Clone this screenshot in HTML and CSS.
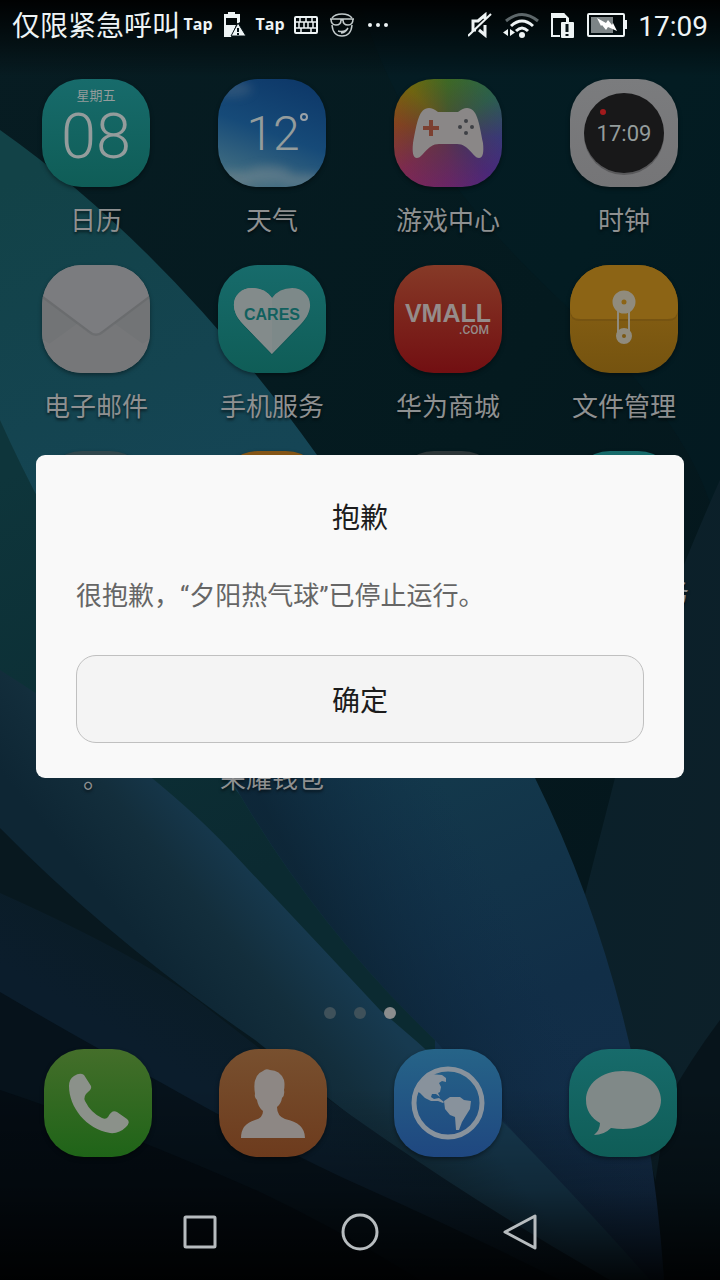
FILE: index.html
```
<!DOCTYPE html>
<html lang="zh-CN">
<head>
    <meta charset="UTF-8">
    <meta name="viewport" content="width=device-width, initial-scale=1.0">
    <title>抱歉</title>
    <link rel="stylesheet" href="styles.css">
</head>
<body>
    <div class="phone">
        <!-- 壁纸 -->
        <svg class="wallpaper" viewBox="0 0 720 1280" preserveAspectRatio="none" aria-hidden="true">
            <defs>
                <linearGradient id="base" x1="0" y1="0" x2="1" y2="1">
                    <stop offset="0" stop-color="#071c22"/>
                    <stop offset="0.5" stop-color="#041a1f"/>
                    <stop offset="1" stop-color="#05141b"/>
                </linearGradient>
                <linearGradient id="petal" gradientUnits="userSpaceOnUse" x1="80" y1="150" x2="560" y2="1250">
                    <stop offset="0" stop-color="#124247"/>
                    <stop offset="0.3" stop-color="#154555"/>
                    <stop offset="0.6" stop-color="#13384b"/>
                    <stop offset="0.8" stop-color="#112e47"/>
                    <stop offset="1" stop-color="#142d4a"/>
                </linearGradient>
                <linearGradient id="petalShade" gradientUnits="userSpaceOnUse" x1="330" y1="930" x2="480" y2="850">
                    <stop offset="0" stop-color="#0c2233" stop-opacity="0.8"/>
                    <stop offset="1" stop-color="#0f2b48" stop-opacity="0"/>
                </linearGradient>
                <linearGradient id="green" gradientUnits="userSpaceOnUse" x1="0" y1="480" x2="200" y2="900">
                    <stop offset="0" stop-color="#0e353b"/>
                    <stop offset="1" stop-color="#0b2a31"/>
                </linearGradient>
                <linearGradient id="band" gradientUnits="userSpaceOnUse" x1="130" y1="930" x2="240" y2="840">
                    <stop offset="0" stop-color="#0e2634"/>
                    <stop offset="0.5" stop-color="#132e3c"/>
                    <stop offset="1" stop-color="#173a50"/>
                </linearGradient>
                <linearGradient id="low" gradientUnits="userSpaceOnUse" x1="60" y1="1000" x2="120" y2="900">
                    <stop offset="0" stop-color="#0b1d2c"/>
                    <stop offset="1" stop-color="#0a1c25"/>
                </linearGradient>
                <linearGradient id="side" x1="0" y1="0" x2="1" y2="1">
                    <stop offset="0" stop-color="#0a202a"/>
                    <stop offset="1" stop-color="#0d2029"/>
                </linearGradient>
                <linearGradient id="fade" x1="0" y1="0" x2="0" y2="1">
                    <stop offset="0" stop-color="#000" stop-opacity="0.95"/>
                    <stop offset="0.06" stop-color="#000" stop-opacity="0"/>
                    <stop offset="0.85" stop-color="#000" stop-opacity="0"/>
                    <stop offset="0.93" stop-color="#000" stop-opacity="0.3"/>
                    <stop offset="1" stop-color="#000" stop-opacity="0.9"/>
                </linearGradient>
            </defs>
            <rect width="720" height="1280" fill="url(#base)"/>
            <path d="M360 0 Q400 150 560 300 T720 560 V0Z" fill="#04202a" opacity="0.3"/>
            <path d="M720 480 Q640 660 615 778 L585 895 L680 1280 H720Z" fill="url(#side)"/>
            <path d="M720 1020 Q690 1060 668 1100 L640 1280 H720Z" fill="#07141b"/>
            <path d="M0 130 Q170 250 317 455 Q450 610 535 778 Q645 1000 664 1280 H0Z" fill="url(#petal)"/>
            <path d="M200 720 L240 795 Q320 930 435 1040 L640 1280 H664 Q645 1000 535 778 L500 720Z" fill="url(#petalShade)"/>
            <path d="M0 420 Q90 620 240 795 Q320 930 435 1040 V1100 H0Z" fill="url(#green)"/>
            <path d="M0 670 Q150 765 230 850 Q310 935 380 1010 Q440 1060 503 1122 Q570 1190 650 1280 H0Z" fill="url(#band)"/>
            <path d="M0 828 Q110 940 255 1040 Q330 1100 560 1280 H0Z" fill="#08181f"/>
            <path d="M0 893 Q150 960 210 1010 Q400 1160 610 1280 H0Z" fill="url(#low)"/>
            <path d="M0 992 Q90 1045 160 1082 Q280 1150 370 1190 Q470 1235 560 1280 H0Z" fill="#06121b"/>
            <path d="M0 1090 Q120 1130 260 1192 Q340 1230 420 1280 H0Z" fill="#040c13"/>
            <rect width="720" height="1280" fill="url(#fade)"/>
        </svg>

        <header class="status-bar">
            <span class="carrier">仅限紧急呼叫</span>
            <div class="notices">
                <span class="tap">Tap</span>
                <span>
                    <svg width="24" height="26" viewBox="0 0 24 26">
                        <path d="M6 0h7v2h5v8l-3 2V6H4v8h9L9 25H2V2h4z" fill="#eef4f5"/>
                        <path d="M4 13h10l-5 12H2z" fill="#eef4f5"/>
                        <path d="M16 11l8 13H9z" fill="#eef4f5" stroke="#061317" stroke-width="1"/>
                        <path d="M16 16v4M16 21v2" stroke="#061317" stroke-width="2"/>
                    </svg>
                </span>
                <span class="tap">Tap</span>
                <span>
                    <svg width="24" height="18" viewBox="0 0 24 18" fill="none" stroke="#eef4f5">
                        <rect x="1" y="1" width="22" height="16" rx="1" stroke-width="2"/>
                        <path d="M1 6h22M1 12h22M6 1v5M12 1v5M18 1v5M5 6v6M10 6v6M14 6v6M19 6v6M7 12v5M17 12v5" stroke-width="1.500"/>
                    </svg>
                </span>
                <span>
                    <svg width="26" height="24" viewBox="0 0 26 24" fill="none" stroke="#c3cbcc" stroke-width="1.500">
                        <path d="M3 5Q6 1 13 1t10 4"/>
                        <path d="M1 6h24M2 6q0 6 5 6t5-5h2q0 5 5 5t5-6"/>
                        <path d="M3 12q1 11 10 11t10-11M9 18q7 2 10-3M12 20q4 0 7-5"/>
                    </svg>
                </span>
                <span>
                    <svg width="20" height="4" viewBox="0 0 20 4" fill="#eef4f5">
                        <circle cx="2" cy="2" r="2"/><circle cx="10" cy="2" r="2"/><circle cx="18" cy="2" r="2"/>
                    </svg>
                </span>
            </div>
            <div class="signals">
                <svg width="24" height="26" viewBox="1 0 24 26" fill="none" stroke="#eef4f5" stroke-width="2">
                    <path d="M18 7V3l-7 6H6v9h3M18 13v10l-6-5" stroke-width="3"/>
                    <path d="M1 24L24 2"/>
                </svg>
                <svg width="38" height="26" viewBox="0 0 38 26" fill="none" stroke-width="3">
                    <path d="M4 9Q20-4 36 9" stroke="#5d676a"/>
                    <path d="M9 14q11-10 22 0M14 19q6-6 12 0" stroke="#eef4f5"/>
                    <circle cx="20" cy="23" r="3" fill="#eef4f5"/>
                    <path d="M6 17v7l-5-3.500zM8 17v7l5-3.500z" fill="#eef4f5"/>
                </svg>
                <svg width="26" height="26" viewBox="0 0 26 26">
                    <path d="M1 1h13l5 5v4h-3V6H3v17h7v2H1z" fill="#eef4f5"/>
                    <path d="M3 1h11l3 5H3z" fill="#eef4f5"/>
                    <rect x="11" y="10" width="13" height="16" rx="1" fill="#eef4f5"/>
                    <path d="M17 12v8M17 22v2" stroke="#061317" stroke-width="3"/>
                </svg>
                <svg width="42" height="26" viewBox="0 0 42 26">
                    <rect x="2" y="2" width="36" height="22" rx="1" fill="none" stroke="#eef4f5" stroke-width="2"/>
                    <rect x="5" y="5" width="22" height="16" fill="#7c8486"/>
                    <path d="M39 8h2v9h-2z" fill="#eef4f5"/>
                    <path d="M11 6l9 5 2-3 4 5 1-2 4 8-9-4-2 3-4-5-1 1z" fill="#fff"/>
                </svg>
                <span class="time">17:09</span>
            </div>
        </header>

        <main class="apps">
            <button class="app" type="button">
                <span class="icon teal">
                    <svg viewBox="0 0 108 108">
                        <text class="weekday" x="54" y="21">星期五</text>
                        <text class="day" x="54" y="79">08</text>
                    </svg>
                </span>
                <span class="label">日历</span>
            </button>
            <button class="app" type="button">
                <span class="icon sky">
                    <svg viewBox="0 0 108 108">
                        <defs>
                            <filter id="soft"><feGaussianBlur stdDeviation="5"/></filter>
                        </defs>
                        <g filter="url(#soft)" fill="#7b8b93" opacity="0.5">
                            <ellipse cx="50" cy="96" rx="24" ry="9"/>
                            <ellipse cx="18" cy="100" rx="22" ry="8"/>
                            <ellipse cx="84" cy="102" rx="24" ry="7"/>
                            <ellipse cx="14" cy="10" rx="20" ry="8" opacity="0.5"/>
                        </g>
                        <text class="degrees" x="55" y="71">12</text>
                        <circle cx="86" cy="38" r="3" fill="none" stroke="#9aa2a8" stroke-width="2"/>
                    </svg>
                </span>
                <span class="label">天气</span>
            </button>
            <button class="app" type="button">
                <span class="icon rainbow">
                    <svg viewBox="0 0 108 108">
                        <path d="M35 29q4 0 9 4h20q5-4 9-4c10 0 12 14 16 35 1 9 0 15-4 15-6 0-10-14-22-14H45C33 65 29 79 23 79c-4 0-5-6-4-15 4-21 6-35 16-35z" fill="#8a8787"/>
                        <path d="M29 49h16M37 41v16" stroke="#7c4031" stroke-width="4"/>
                        <g fill="#3e4045"><circle cx="72" cy="42" r="2"/><circle cx="72" cy="54" r="2"/><circle cx="66" cy="48" r="2"/><circle cx="78" cy="48" r="2"/></g>
                    </svg>
                </span>
                <span class="label">游戏中心</span>
            </button>
            <button class="app" type="button">
                <span class="icon silver">
                    <svg viewBox="0 0 108 108">
                        <circle cx="54" cy="56" r="40" fill="#3c3c3e" opacity="0.5"/>
                        <circle cx="54" cy="54" r="40" fill="#181819"/>
                        <circle cx="33" cy="33" r="3" fill="#a11a1c"/>
                        <text class="clock" x="54" y="62">17:09</text>
                    </svg>
                </span>
                <span class="label">时钟</span>
            </button>

            <button class="app" type="button">
                <span class="icon silver">
                    <svg viewBox="0 0 108 108">
                        <path d="M0 30L54 68 108 30V74L54 108 0 74z" fill="#727476"/>
                        <path d="M0 84L36 58Q54 78 72 58L108 84V108H0z" fill="#767779"/>
                        <path d="M0 31L48 67Q54 72 60 67L108 31" fill="none" stroke="#5f6264" stroke-width="3" opacity="0.4"/>
                        <path d="M0 0H108V30L60 66Q54 71 48 66L0 30z" fill="#7b7c7f"/>
                    </svg>
                </span>
                <span class="label">电子邮件</span>
            </button>
            <button class="app" type="button">
                <span class="icon teal">
                    <svg viewBox="0 0 108 108">
                        <path d="M54 90L25 60C8 43 17 23 34 23q13 0 20 10 7-10 20-10c17 0 26 20 9 37z" fill="#0b4b49" opacity="0.5"/>
                        <path d="M54 89L25 59C8 42 17 23 34 23q13 0 20 10 7-10 20-10c17 0 26 19 9 36z" fill="#7d8989"/>
                        <path d="M54 33v56L25 59C8 42 17 23 34 23q13 0 20 10z" fill="#838b8b"/>
                        <text class="cares" x="54" y="55">CARES</text>
                    </svg>
                </span>
                <span class="label">手机服务</span>
            </button>
            <button class="app" type="button">
                <span class="icon red">
                    <svg viewBox="0 0 108 108">
                        <text class="vmall" x="54" y="57">VMALL</text>
                        <text class="com" x="95" y="69">.COM</text>
                    </svg>
                </span>
                <span class="label">华为商城</span>
            </button>
            <button class="app" type="button">
                <span class="icon yellow">
                    <svg viewBox="0 0 108 108">
                        <path d="M0 0H108V46Q108 56 98 56H10Q0 56 0 46z" fill="#6b4c0f" opacity="0.5"/>
                        <path d="M0 0H108V44Q108 54 98 54H10Q0 54 0 44z" fill="#8c6415"/>
                        <path d="M48 40v30M59 40v30" stroke="#908b7d" stroke-width="2"/>
                        <circle cx="54" cy="37" r="7" fill="#8c6415" stroke="#908b7d" stroke-width="9"/>
                        <circle cx="54" cy="71" r="5" fill="#7b5813" stroke="#908b7d" stroke-width="6"/>
                    </svg>
                </span>
                <span class="label">文件管理</span>
            </button>

            <button class="app" type="button"><span class="icon slate"></span></button>
            <button class="app" type="button"><span class="icon amber"></span></button>
            <button class="app" type="button"><span class="icon graphite"></span></button>
            <button class="app" type="button"><span class="icon teal"></span><span class="label">会员与服务</span></button>

            <button class="app" type="button"><span class="icon slate"></span><span class="label">。</span></button>
            <button class="app" type="button"><span class="icon amber"></span><span class="label">荣耀钱包</span></button>
        </main>

        <div class="pages">
            <span class="dot"></span>
            <span class="dot"></span>
            <span class="dot current"></span>
        </div>

        <div class="dock">
            <button class="app" type="button" aria-label="电话">
                <span class="icon green">
                    <svg viewBox="0 0 108 108">
                        <path d="M30 27q6-4 10-1l7 11q1 3-3 6-5 4-3 9 6 12 17 17 4 2 6-1 4-8 9-5l10 7q4 3-1 8-7 7-16 6C42 80 25 58 25 37q0-7 5-10z" fill="#8b918a"/>
                    </svg>
                </span>
            </button>
            <button class="app" type="button" aria-label="联系人">
                <span class="icon orange">
                    <svg viewBox="0 0 108 108">
                        <path d="M22 89q0-14 14-18 8-2 8-9-5-4-6-11-3-3-2-6-3-19 8-23 3-3 7-1 10 0 14 10 1 5 0 10 1 5-2 8-1 6-5 9 0 9 8 12 20 4 20 19z" fill="#8d8784"/>
                    </svg>
                </span>
            </button>
            <button class="app" type="button" aria-label="浏览器">
                <span class="icon blue">
                    <svg viewBox="0 0 108 108">
                        <circle cx="54" cy="54" r="34" fill="none" stroke="#88929c" stroke-width="5"/>
                        <path d="M22 42L26 33 36 25 48 26 52 29 52 33 48 32 45 34 47 38 46 43 44 44 46 48 42 45 38 45 37 48 40 50 45 49 50 53 49 54 44 52 37 52 31 49 26 44z" fill="#88929c"/>
                        <path d="M50 52L56 48 66 48 70 51 77 52 76 60 71 68 68 73 65 81 62 81 61 68 56 66 51 60z" fill="#88929c"/>
                    </svg>
                </span>
            </button>
            <button class="app" type="button" aria-label="信息">
                <span class="icon teal">
                    <svg viewBox="0 0 108 108">
                        <path d="M54 22c22 0 38 13 38 29S77 80 54 80q-6 0-12-1-7 7-17 7 6-5 6-12Q17 66 17 51c0-16 15-29 37-29z" fill="#808988"/>
                    </svg>
                </span>
            </button>
        </div>

        <nav class="nav-bar">
            <button type="button" aria-label="最近任务">
                <svg width="40" height="40" viewBox="0 0 40 40"><rect x="5" y="5" width="30" height="30" rx="1"/></svg>
            </button>
            <button type="button" aria-label="主页">
                <svg width="40" height="40" viewBox="0 0 40 40"><circle cx="20" cy="20" r="17"/></svg>
            </button>
            <button type="button" aria-label="返回">
                <svg width="40" height="40" viewBox="0 0 40 40"><path d="M5 20L35 4V36z"/></svg>
            </button>
        </nav>

        <!-- 错误提示框 -->
        <div class="overlay">
            <div class="dialog" role="alertdialog" aria-labelledby="dialogTitle" aria-describedby="dialogText">
                <h1 id="dialogTitle">抱歉</h1>
                <p id="dialogText">很抱歉，“夕阳热气球”已停止运行。</p>
                <button type="button" class="confirm">确定</button>
            </div>
        </div>
    </div>
</body>
</html>
```
FILE: styles.css
```
* {
    box-sizing: border-box;
}

body {
    margin: 0;
    background-color: #041519;
    font-family: Roboto, "Noto Sans CJK SC", sans-serif;
}

button {
    margin: 0;
    padding: 0;
    border: none;
    background: none;
    font-family: inherit;
    cursor: pointer;
}

svg {
    display: block;
}

.phone {
    position: relative;
    display: flex;
    flex-direction: column;
    min-height: 100vh;
    overflow: hidden;
}

.wallpaper {
    position: absolute;
    inset: 0;
    width: 100%;
    height: 100%;
    z-index: -1;
}

/* status bar */
.status-bar {
    display: flex;
    align-items: center;
    height: 50px;
    padding: 0 12px;
    color: #eef4f5;
}

.carrier {
    padding-bottom: 2px;
    font-size: 28px;
    white-space: nowrap;
}

.notices {
    display: flex;
    flex: 1;
}

.notices span {
    display: flex;
    align-items: center;
    justify-content: center;
    width: 36px;
    height: 28px;
}

.notices .tap {
    padding-bottom: 2px;
    font-family: "Open Sans", sans-serif;
    font-size: 16px;
    font-weight: 700;
}

.signals {
    display: flex;
    align-items: center;
    gap: 10px;
}

.time {
    padding-top: 3px;
    font-size: 28px;
    line-height: 32px;
}

/* home screen */
.apps {
    display: grid;
    grid-template-columns: repeat(4, 1fr);
    grid-auto-rows: 186px;
    padding: 29px 8px 0;
}

.app {
    display: flex;
    flex-direction: column;
    align-items: center;
    color: #8e9091;
}

.icon {
    display: block;
    width: 108px;
    height: 108px;
    border-radius: 40px;
    overflow: hidden;
    box-shadow: 0 2px 4px rgba(0, 0, 0, 0.4);
}

.label {
    margin-top: 16px;
    font-size: 26px;
    line-height: 36px;
    white-space: nowrap;
    text-shadow: 0 2px 3px rgba(0, 0, 0, 0.6);
}

.teal {
    background: linear-gradient(#176b6b, #0f5d57);
}

.sky {
    background: linear-gradient(200deg, #0c3566, #164a78 50%, #3d6a80 85%, #52717d);
}

.rainbow {
    background: radial-gradient(rgba(80, 60, 60, 0.7), rgba(80, 60, 60, 0) 75%), conic-gradient(from 0deg, #3c6b24, #2b5f4c 50deg, #38387a 95deg, #4a2878 135deg, #6a2468 180deg, #7c2a50 230deg, #86431e 280deg, #70660f 320deg, #3c6b24);
}

.silver {
    background: linear-gradient(#7b7c7e, #757577);
}

.red {
    background: linear-gradient(#863a27, #7c241c 50%, #720f12);
}

.yellow {
    background: linear-gradient(#8c6415, #75530f);
}

.slate {
    background: #30474d;
}

.amber {
    background: #845516;
}

.graphite {
    background: #2c3638;
}

.green {
    background: linear-gradient(#446e2a, #1f6418);
}

.orange {
    background: linear-gradient(#78502f, #6d3b1d);
}

.blue {
    background: linear-gradient(#266488, #1f4780);
}

.icon text {
    fill: #949c9c;
    text-anchor: middle;
}

.icon .weekday {
    font-size: 13px;
}

.icon .day {
    font-size: 63px;
    font-weight: 300;
}

.icon .degrees {
    font-size: 48px;
    font-weight: 300;
}

.icon .clock {
    font-size: 22px;
}

.icon .cares {
    fill: #11605e;
    font: bold 16px "Liberation Sans", sans-serif;
}

.icon .vmall {
    fill: #958c8a;
    font: bold 25px "Liberation Sans", sans-serif;
}

.icon .com {
    fill: #958c8a;
    font-size: 12px;
    font-weight: 500;
    text-anchor: end;
}

.pages {
    display: flex;
    justify-content: center;
    gap: 18px;
    margin-top: auto;
    padding-bottom: 30px;
}

.dot {
    width: 12px;
    height: 12px;
    border-radius: 50%;
    background-color: #3f515a;
}

.dot.current {
    background-color: #8b8d8e;
}

.dock {
    display: grid;
    grid-template-columns: repeat(4, 1fr);
    padding: 0 10px 27px;
}

/* navigation bar */
.nav-bar {
    display: flex;
    justify-content: center;
    gap: 120px;
    height: 96px;
}

.nav-bar svg {
    fill: none;
    stroke: #b7bcbf;
    stroke-width: 3;
    stroke-linejoin: round;
}

/* dialog */
.overlay {
    position: absolute;
    inset: 50px 0 98px;
    display: flex;
    align-items: center;
    justify-content: center;
    padding: 0 36px;
}

.dialog {
    width: 100%;
    padding: 42px 40px 35px;
    border-radius: 9px;
    background-color: #f9f9f9;
}

.dialog h1 {
    margin: 0;
    color: #1c1c1c;
    font-size: 28px;
    font-weight: 400;
    line-height: 44px;
    text-align: center;
}

.dialog p {
    margin: 35px 0 39px;
    color: #666;
    font-size: 26px;
    line-height: 40px;
}

.confirm {
    display: block;
    width: 100%;
    height: 88px;
    border: 1px solid #c0c0c0;
    border-radius: 20px;
    background-color: #f4f4f4;
    color: #1c1c1c;
    font-size: 28px;
}
```
